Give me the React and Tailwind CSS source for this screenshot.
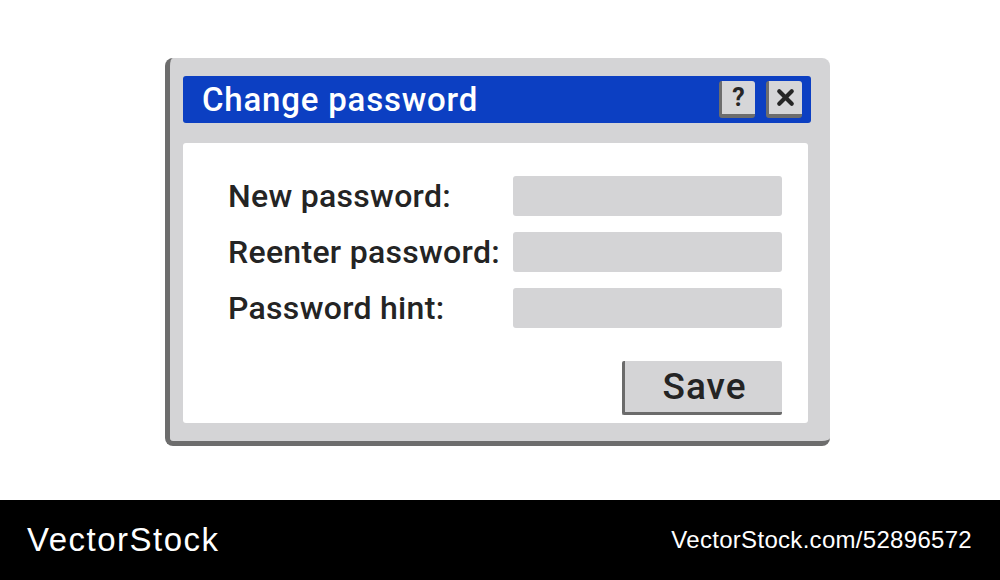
import { X } from 'lucide-react'

function TitleButton({ children }) {
  return (
    <div className="flex h-[37px] w-[36px] items-center justify-center rounded-[3px] border-b-[4px] border-l-[3px] border-[#6d6d6d] bg-[#d6d6d8] text-[#262626]">
      {children}
    </div>
  )
}

function Field({ label }) {
  return (
    <div className="flex h-[40px] items-center">
      <span className="w-[285px] text-[32px] font-medium leading-none tracking-[0.3px] text-[#242424]">{label}</span>
      <div className="h-[40px] w-[269px] rounded-[3px] bg-[#d4d4d6]" />
    </div>
  )
}

export default function App() {
  return (
    <div className="h-[580px] w-[1000px] overflow-hidden bg-white font-['Roboto',sans-serif]">
      <div className="h-[500px] pl-[165px] pt-[58px]">
        <div className="h-[388px] w-[665px] rounded-[8px] border-b-[5px] border-l-[5px] border-[#6d6d6d] bg-[#d4d4d6] pl-[13px] pt-[18px]">
          <div className="flex h-[47px] w-[628px] items-center justify-between rounded-[3px] bg-[#0c3fc2] pl-[19px] pr-[9px]">
            <span className="text-[33px] font-medium leading-none tracking-[0.8px] text-white">Change password</span>
            <div className="flex gap-[11px]">
              <TitleButton>
                <span className="text-[25px] font-bold leading-none">?</span>
              </TitleButton>
              <TitleButton>
                <X size={25} strokeWidth={4} />
              </TitleButton>
            </div>
          </div>
          <div className="mt-[20px] flex h-[280px] w-[625px] flex-col rounded-[3px] bg-white pl-[45px] pr-[26px] pt-[33px]">
            <div className="flex flex-col gap-[16px]">
              <Field label="New password:" />
              <Field label="Reenter password:" />
              <Field label="Password hint:" />
            </div>
            <div className="mt-[33px] flex justify-end">
              <div className="flex h-[54px] w-[160px] items-center justify-center rounded-[2px] border-b-[3px] border-l-[3px] border-[#6b6b6b] bg-[#d4d4d6] pl-[2px] text-[37px] font-medium leading-none tracking-[1px] text-[#242424]">
                Save
              </div>
            </div>
          </div>
        </div>
      </div>
      <div className="flex h-[80px] items-center justify-between bg-black pl-[27px] pr-[28px] font-['Liberation_Sans',sans-serif] text-white">
        <span className="text-[33px] tracking-[1.5px]">VectorStock</span>
        <span className="text-[24px] tracking-[0.3px]">VectorStock.com/52896572</span>
      </div>
    </div>
  )
}
